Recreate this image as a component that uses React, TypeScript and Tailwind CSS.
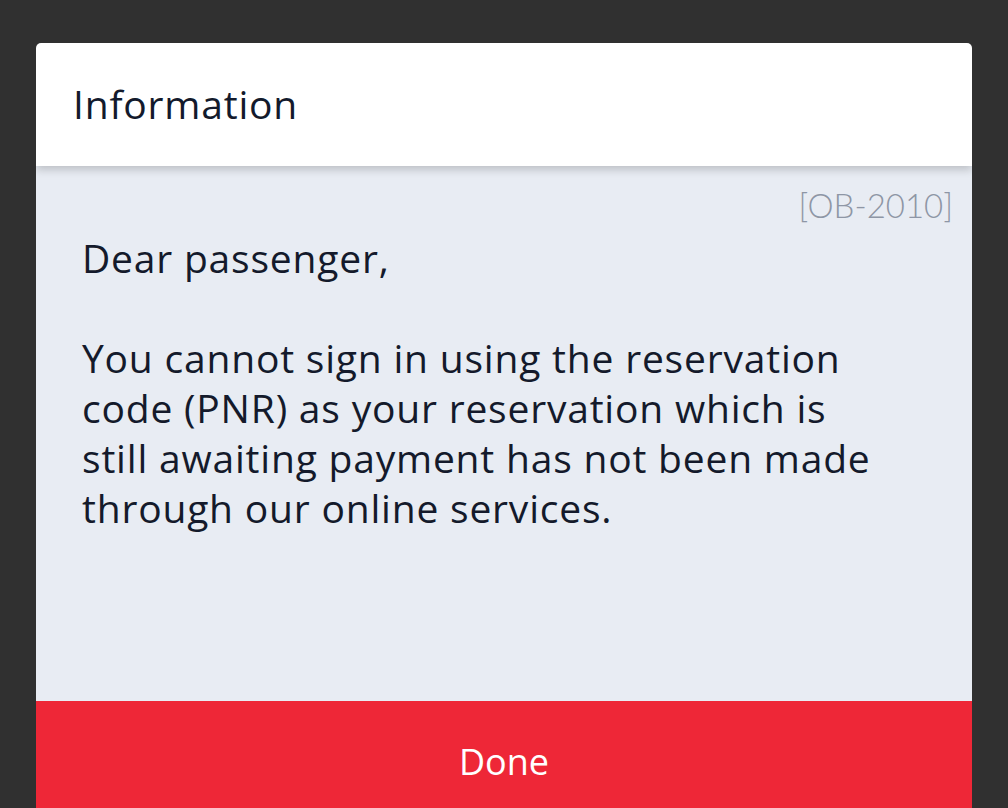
import React from 'react';

/** 情報ダイアログ */
const App: React.FC = () => {
  return (
    <div className="w-[1008px] h-[808px] overflow-hidden bg-[#303030] pt-[43px] px-[36px] font-['Open_Sans',sans-serif]">
      <div className="flex flex-col h-[800px] rounded-t-[5px] overflow-hidden">
        <div className="relative z-10 h-[123px] bg-white flex items-center pl-[37px] shadow-[0_4px_8px_rgba(0,0,0,0.18)]">
          <h1 className="text-[39px] tracking-[0.8px] text-[#131a2c]">Information</h1>
        </div>
        <div className="h-[535px] bg-[#e8ecf3] flex flex-col pl-[46px] pt-[19px] pr-[19px]">
          <div className="text-right text-[33px] font-light font-['Lato',sans-serif] text-[#8e96a5] leading-[40px]">[OB-2010]</div>
          <div className="text-[39px] tracking-[0.8px] leading-[50px] text-[#141a2b] mt-[8px]">
            <p>Dear passenger,</p>
            <p className="mt-[50px]">
              You cannot sign in using the reservation<br />
              code (PNR) as your reservation which is<br />
              still awaiting payment has not been made<br />
              through our online services.
            </p>
          </div>
        </div>
        <button className="h-[142px] bg-[#ee2737] text-white text-[36px] flex justify-center pt-[34px]">
          Done
        </button>
      </div>
    </div>
  );
};

export default App;
